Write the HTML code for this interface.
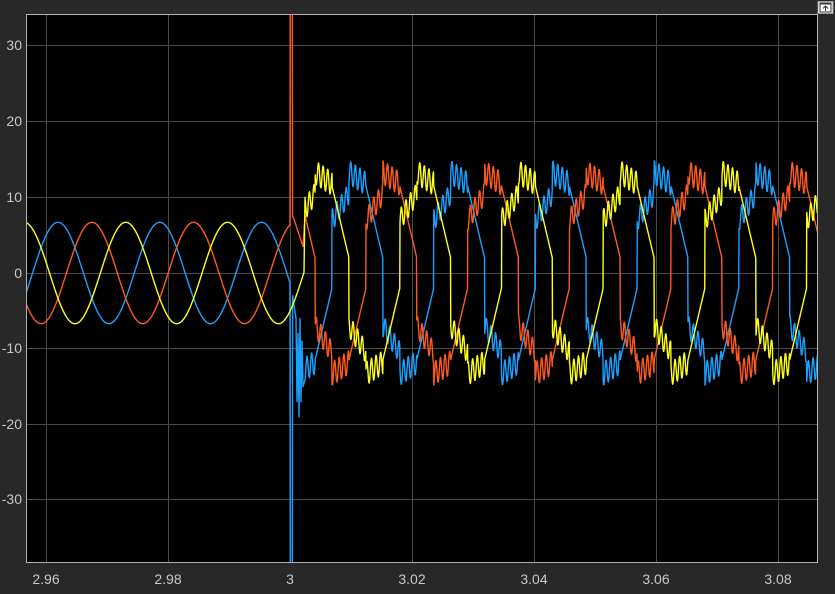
<!DOCTYPE html>
<html><head><meta charset="utf-8"><style>
body{margin:0;background:#282828;width:835px;height:594px;overflow:hidden;font-family:"Liberation Sans",sans-serif;}
svg{position:absolute;left:0;top:0}
.t{fill:#c8c8c8;font-size:14px;font-family:"Liberation Sans",sans-serif}
</style></head><body>
<svg id="s" width="835" height="594" xmlns="http://www.w3.org/2000/svg">
<defs><clipPath id="c"><rect x="26" y="14" width="792" height="549"/></clipPath></defs>
<rect x="26" y="14" width="792" height="549" fill="#000"/>
<g stroke="#4a4a4a" stroke-width="1">
<line x1="46.5" y1="14" x2="46.5" y2="563"/><line x1="168.5" y1="14" x2="168.5" y2="563"/><line x1="290.5" y1="14" x2="290.5" y2="563"/><line x1="412.5" y1="14" x2="412.5" y2="563"/><line x1="534.5" y1="14" x2="534.5" y2="563"/><line x1="656.5" y1="14" x2="656.5" y2="563"/><line x1="778.5" y1="14" x2="778.5" y2="563"/>
<line x1="26" y1="45.5" x2="818" y2="45.5"/><line x1="26" y1="121.5" x2="818" y2="121.5"/><line x1="26" y1="197.5" x2="818" y2="197.5"/><line x1="26" y1="273.5" x2="818" y2="273.5"/><line x1="26" y1="348.5" x2="818" y2="348.5"/><line x1="26" y1="424.5" x2="818" y2="424.5"/><line x1="26" y1="499.5" x2="818" y2="499.5"/>
</g>
<g id="lines" clip-path="url(#c)" fill="none" stroke-width="1.4" stroke-linejoin="round"></g>
<rect x="26.5" y="14.5" width="791" height="548" fill="none" stroke="#b4b4b4" stroke-width="1"/>
<g class="t" text-anchor="end">
<text x="22" y="50">30</text><text x="22" y="126">20</text><text x="22" y="202">10</text><text x="22" y="278">0</text><text x="22" y="353">-10</text><text x="22" y="429">-20</text><text x="22" y="504">-30</text>
</g>
<g class="t" text-anchor="middle">
<text x="46" y="584">2.96</text><text x="168" y="584">2.98</text><text x="290" y="584">3</text><text x="412" y="584">3.02</text><text x="534" y="584">3.04</text><text x="656" y="584">3.06</text><text x="778" y="584">3.08</text>
</g>
<rect x="818" y="1.5" width="15" height="12" fill="#fff" stroke="#999"/>
<rect x="820" y="3" width="11" height="9" fill="#fff" stroke="#333" stroke-width="1"/>
<line x1="820" y1="4" x2="831" y2="4" stroke="#333"/>
<path d="M825.5 11V6M823 8.5l2.5-2.5 2.5 2.5" stroke="#333" fill="none"/>
</svg>
<script>
var P=101.7,y0=273,k=7.57;
function post(x,j){var ph=((x-j)%P+P)%P/P*300,s=1;if(ph>=150){ph-=150;s=-1}
var r=1.4*Math.sin(2*Math.PI*x/4.6),v;
if(ph<50)v=7+3.5*ph/50+r;else if(ph<100)v=13.3-1.5*(ph-50)/50+r*1.1;else v=11.5-9.5*(ph-100)/50;return s*v}
var ph=[{c:"#1aa0ff",pk:58,j:332},{c:"#ff5a1e",pk:58+P/3,j:332+P/3},{c:"#ffff1a",pk:58+2*P/3,j:332+2*P/3}];
var g=document.getElementById("lines");
ph.forEach(function(o,i){var d=[];function Y(v){return (y0-v*k).toFixed(1)}
for(var x=26;x<=290;x+=0.5){d.push(x+","+Y(6.7*Math.cos(2*Math.PI*(x-o.pk)/P)))}
if(i==1){d.push("290.3,"+Y(40),"292.3,"+Y(40),"292.6,"+Y(7.5));for(var x=294;x<304;x++)d.push(x+","+Y(7.5-(x-293)*0.4));}
else if(i==0){d.push("290.3,"+Y(-40),"292.3,"+Y(-40),"292.6,"+Y(-3),"296,"+Y(-6),"297,"+Y(-17),"298,"+Y(-8),"299,"+Y(-19),"300,"+Y(-6),"301,"+Y(-17),"302,"+Y(-9),"303,"+Y(-15));}
else{for(var x=291;x<305;x++)d.push(x+","+Y(6.7*Math.cos(2*Math.PI*(x-o.pk)/P)));d.push("305,"+Y(10));}
for(var x=305;x<=820;x+=0.25)d.push(x.toFixed(2)+","+Y(post(x,o.j)));
var p=document.createElementNS("http://www.w3.org/2000/svg","path");
p.setAttribute("d","M"+d.join("L"));p.setAttribute("stroke",o.c);g.appendChild(p);});
</script>
</body></html>
